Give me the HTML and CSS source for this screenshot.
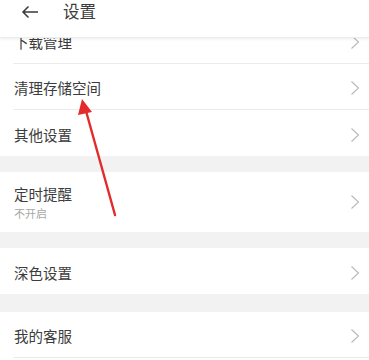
FILE: index.html
```html
<!DOCTYPE html>
<html lang="zh-CN">
<head>
<meta charset="utf-8">
<title>设置</title>
<link rel="stylesheet" href="styles.css">
</head>
<body>
<div class="page">
  <header class="topbar">
    <svg class="back" width="18" height="14" viewBox="0 0 18 14"><path d="M17 7H2M7.5 1.5L2 7l5.5 5.5" fill="none" stroke="#3a3a3a" stroke-width="1.5"/></svg>
    <span class="title">设置</span>
  </header>
  <div class="list">
    <div class="group">
      <div class="row"><span class="label">下载管理</span><svg class="chev" width="10" height="16" viewBox="0 0 10 16"><path d="M1.5 1.5L8.5 8l-7 6.5" fill="none" stroke="#b8b8b8" stroke-width="1.1"/></svg></div>
      <div class="row"><span class="label">清理存储空间</span><svg class="chev" width="10" height="16" viewBox="0 0 10 16"><path d="M1.5 1.5L8.5 8l-7 6.5" fill="none" stroke="#b8b8b8" stroke-width="1.1"/></svg></div>
      <div class="row last"><span class="label">其他设置</span><svg class="chev" width="10" height="16" viewBox="0 0 10 16"><path d="M1.5 1.5L8.5 8l-7 6.5" fill="none" stroke="#b8b8b8" stroke-width="1.1"/></svg></div>
    </div>
    <div class="gap"></div>
    <div class="group">
      <div class="row tall last"><div class="texts"><span class="label">定时提醒</span><span class="sub">不开启</span></div><svg class="chev" width="10" height="16" viewBox="0 0 10 16"><path d="M1.5 1.5L8.5 8l-7 6.5" fill="none" stroke="#b8b8b8" stroke-width="1.1"/></svg></div>
    </div>
    <div class="gap"></div>
    <div class="group">
      <div class="row last"><span class="label">深色设置</span><svg class="chev" width="10" height="16" viewBox="0 0 10 16"><path d="M1.5 1.5L8.5 8l-7 6.5" fill="none" stroke="#b8b8b8" stroke-width="1.1"/></svg></div>
    </div>
    <div class="gap gap-lg"></div>
    <div class="group">
      <div class="row"><span class="label">我的客服</span><svg class="chev" width="10" height="16" viewBox="0 0 10 16"><path d="M1.5 1.5L8.5 8l-7 6.5" fill="none" stroke="#b8b8b8" stroke-width="1.1"/></svg></div>
    </div>
  </div>
  <svg class="annot" width="369" height="360" viewBox="0 0 369 360">
    <line x1="115" y1="215" x2="86" y2="111" stroke="#e32b2b" stroke-width="2.4" stroke-linecap="round"/>
    <polygon points="82,99 92,112 78,115" fill="#e32b2b"/>
  </svg>
</div>
</body>
</html>
```

FILE: styles.css
```css
html, body {
  margin: 0;
  padding: 0;
  background: #ffffff;
}
body {
  font-family: "Noto Sans CJK SC", "Noto Sans", sans-serif;
  color: #3c3c3c;
}
.page {
  position: relative;
  width: 369px;
  height: 360px;
  overflow: hidden;
}
.topbar {
  position: absolute;
  top: 0;
  left: 0;
  right: 0;
  height: 38px;
  background: #ffffff;
  box-shadow: 0 1px 3px rgba(0, 0, 0, 0.08);
  border-bottom: 1px solid #ececec;
  box-sizing: border-box;
  display: flex;
  align-items: flex-start;
  padding: 2px 0 0 21px;
  z-index: 2;
}
.back {
  margin-top: 3px;
}
.title {
  margin-left: 24px;
  font-size: 16.5px;
  line-height: 18px;
  color: #3c3c3c;
}
.list {
  padding-top: 18px;
}
.row {
  height: 46px;
  box-sizing: border-box;
  padding-top: 3px;
  margin-left: 13px;
  padding-right: 9px;
  border-bottom: 1px solid #ececec;
  display: flex;
  align-items: center;
  justify-content: space-between;
}
.row.last {
  border-bottom: none;
}
.row.tall {
  height: 60px;
  padding-top: 0;
}
.label {
  font-size: 14.5px;
  line-height: 18px;
  color: #3c3c3c;
  margin-left: 1px;
}
.texts {
  display: flex;
  flex-direction: column;
}
.sub {
  font-size: 11px;
  line-height: 14px;
  color: #a8a8a8;
  margin-left: 1px;
  margin-top: 3px;
}
.gap {
  height: 16px;
  background: #f2f2f2;
}
.gap-lg {
  height: 18px;
}
.annot {
  position: absolute;
  top: 0;
  left: 0;
  z-index: 3;
  pointer-events: none;
}
```
